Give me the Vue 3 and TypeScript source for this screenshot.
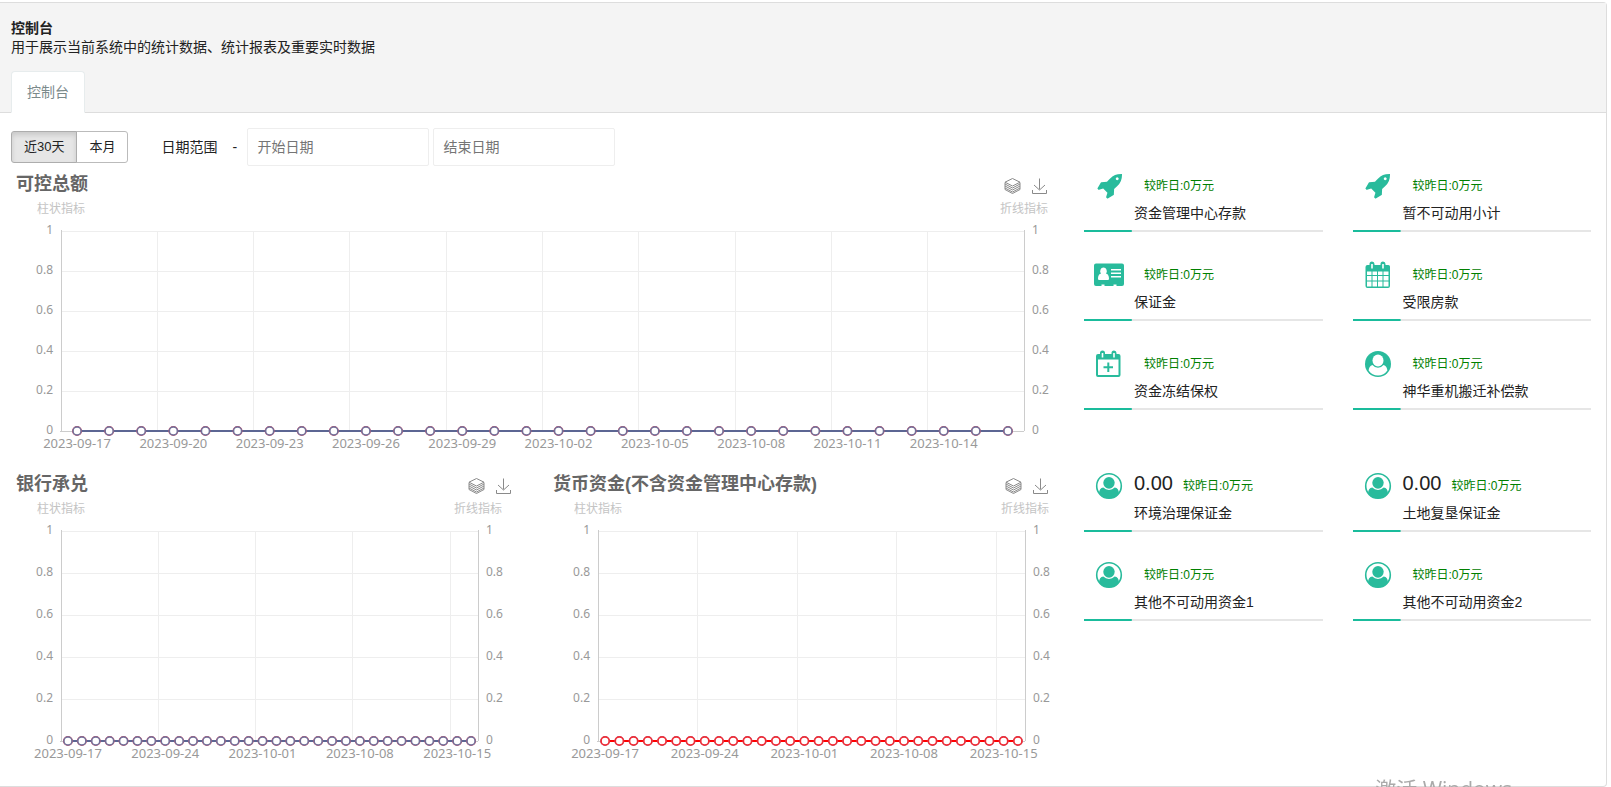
<script setup lang="ts">
import { ref } from 'vue'

type IconName = 'rocket' | 'idcard' | 'calendar' | 'calendar-plus' | 'user' | 'user-outline'

interface Chart {
  id: string
  title: string
  every: number
  tone: string
}

interface Card {
  icon: IconName
  value?: string
  label: string
}

const range = ref<'30' | 'month'>('30')
const startDate = ref('')
const endDate = ref('')

const charts: Chart[] = [
  { id: 'total', title: '可控总额', every: 3, tone: 'blue' },
  { id: 'bank', title: '银行承兑', every: 7, tone: 'blue' },
  { id: 'cash', title: '货币资金(不含资金管理中心存款)', every: 7, tone: 'red' },
]

const groups: Card[][] = [
  [
    { icon: 'rocket', label: '资金管理中心存款' },
    { icon: 'rocket', label: '暂不可动用小计' },
    { icon: 'idcard', label: '保证金' },
    { icon: 'calendar', label: '受限房款' },
    { icon: 'calendar-plus', label: '资金冻结保权' },
    { icon: 'user', label: '神华重机搬迁补偿款' },
  ],
  [
    { icon: 'user-outline', value: '0.00', label: '环境治理保证金' },
    { icon: 'user-outline', value: '0.00', label: '土地复垦保证金' },
    { icon: 'user-outline', label: '其他不可动用资金1' },
    { icon: 'user-outline', label: '其他不可动用资金2' },
  ],
]

const COUNT = 30
const dates = Array.from({ length: COUNT }, (_, i) =>
  new Date(Date.UTC(2023, 8, 17 + i)).toISOString().slice(0, 10),
)
const levels = [1, 0.8, 0.6, 0.4, 0.2, 0]

const center = (i: number): string => `${((i + 0.5) * 100) / COUNT}%`
const edge = (i: number): string => `${(i * 100) / COUNT}%`
const levelY = (v: number): string => `${(1 - v) * 100}%`
const marks = (every: number): number[] => dates.map((_, i) => i).filter((i) => i % every === 0)
</script>

<template>
  <div class="panel">
    <header class="head">
      <h1 class="head-title">控制台</h1>
      <p class="head-text">用于展示当前系统中的统计数据、统计报表及重要实时数据</p>
      <nav class="tabs"><a class="tab" href="#console">控制台</a></nav>
    </header>

    <form class="toolbar" @submit.prevent>
      <div class="btn-group">
        <button type="button" class="btn" :class="{ active: range === '30' }" @click="range = '30'">近30天</button>
        <button type="button" class="btn" :class="{ active: range === 'month' }" @click="range = 'month'">本月</button>
      </div>
      <label class="range-label" for="start-date">日期范围</label>
      <span class="dash">-</span>
      <input id="start-date" v-model="startDate" class="date" type="text" placeholder="开始日期" />
      <input v-model="endDate" class="date" type="text" placeholder="结束日期" aria-label="结束日期" />
    </form>

    <main class="content">
      <div class="charts">
        <section v-for="c in charts" :key="c.id" class="chart" :class="c.id">
          <div class="chart-head">
            <h2 class="chart-title">{{ c.title }}</h2>
            <div class="tools">
              <button type="button" class="tool" aria-label="堆叠">
                <svg width="18" height="18" viewBox="0 0 18 18">
                  <path class="layer" d="M2 7 9.500 11 17 7M2 9 9.500 13 17 9M2 11 9.500 15 17 11M2 5.500V12.500L9.500 16.500 17 12.500V5.500" />
                  <path d="M9.500 1.500 17 5.200 9.500 9 2 5.200Z" />
                </svg>
              </button>
              <button type="button" class="tool" aria-label="保存为图片">
                <svg width="18" height="18" viewBox="0 0 18 18">
                  <path d="M9.500 1.500V12.500M4 8l5.500 5L15 8M2.500 13v3.500h14V13" />
                </svg>
              </button>
            </div>
          </div>
          <div class="axis-names"><span>柱状指标</span><span>折线指标</span></div>
          <svg class="plot" :class="c.tone" width="100%" role="img" :aria-label="c.title">
            <g class="grid-lines">
              <line v-for="v in levels" :key="v" x1="0" x2="100%" :y1="levelY(v)" :y2="levelY(v)" />
              <line v-for="i in marks(c.every)" :key="i" :x1="edge(i)" :x2="edge(i)" y1="0" y2="100%" />
            </g>
            <g class="axes">
              <line x1="0" x2="0" y1="-1" y2="100%" />
              <line x1="100%" x2="100%" y1="-1" y2="100%" />
              <line x1="-1" x2="100%" y1="100%" y2="100%" />
            </g>
            <g class="labels">
              <template v-for="v in levels" :key="v">
                <text x="0" :y="levelY(v)" dx="-8" dy="3" text-anchor="end">{{ v }}</text>
                <text x="100%" :y="levelY(v)" dx="8" dy="3">{{ v }}</text>
              </template>
              <text v-for="i in marks(c.every)" :key="dates[i]" class="day" :x="center(i)" y="100%" dy="17" text-anchor="middle">{{ dates[i] }}</text>
            </g>
            <line class="series" :x1="center(0)" :x2="center(COUNT - 1)" y1="100%" y2="100%" />
            <g v-for="(d, i) in dates" :key="d">
              <circle class="dot under" :cx="center(i)" cy="100%" r="4" />
              <circle class="dot over" :cx="center(i)" cy="100%" r="4" />
            </g>
          </svg>
        </section>
      </div>

      <aside class="stats">
        <div v-for="(group, gi) in groups" :key="gi" class="group">
          <article v-for="card in group" :key="card.label" class="card">
            <div class="icon">
              <svg v-if="card.icon === 'rocket'" width="27" height="27" viewBox="-64 64 1792 1792">
                <path d="M1440 448q0-40-28-68t-68-28-68 28-28 68 28 68 68 28 68-28 28-68zm224-288q0 249-75.500 430.500t-253.500 360.500q-81 80-195 176l-20 379q-2 16-16 26l-384 224q-7 4-16 4-12 0-23-9l-64-64q-13-14-8-32l85-276-281-281-276 85q-3 1-9 1-14 0-23-9l-64-64q-17-19-5-39l224-384q10-14 26-16l379-20q96-114 176-195 188-187 358-258t431-71q14 0 24 9.500t10 22.500z" />
              </svg>
              <svg v-else-if="card.icon === 'idcard'" width="30" height="24" viewBox="0 0 30 24">
                <path fill-rule="evenodd" d="M2 0.500H28a2 2 0 0 1 2 2V21a2 2 0 0 1-2 2H22.500V21.500H19.500V23H10.500V21.500H7.500V23H2a2 2 0 0 1-2-2V2.500a2 2 0 0 1 2-2ZM17 6V7.500h10V6ZM17 9.500v1.500h10V9.500ZM17 13v1.500h10V13ZM9.500 4.500a3.300 3.600 0 0 0-2.400 6.100C5 11 4 13 4 15.500c0 1 .6 1.500 1.500 1.500h8c.9 0 1.500-.5 1.500-1.500 0-2.500-1-4.500-3.100-4.900A3.300 3.600 0 0 0 9.500 4.500Z" />
              </svg>
              <svg v-else-if="card.icon === 'calendar'" width="26" height="28" viewBox="0 0 26 28">
                <path fill-rule="evenodd" d="M2.500 4H4.500V3a2.500 2.500 0 0 1 5 0V4h6V3a2.500 2.500 0 0 1 5 0V4h2A2 2 0 0 1 25 6V25a2 2 0 0 1-2 2H2.500a2 2 0 0 1-2-2V6a2 2 0 0 1 2-2ZM6.200 3v4.500h1.600V3ZM17.200 3v4.500h1.600V3ZM2 10.500V14H6.500V10.500ZM7.500 10.500V14H12V10.500ZM13 10.500V14h4.500V10.500ZM18.500 10.500V14h5V10.500ZM2 15v4.500H6.500V15ZM7.500 15v4.500H12V15ZM13 15v4.500h4.500V15ZM18.500 15v4.500h5V15ZM2 20.500v5H6.500v-5ZM7.500 20.500v5H12v-5ZM13 20.500v5h4.500v-5ZM18.500 20.500v5h5v-5Z" />
              </svg>
              <svg v-else-if="card.icon === 'calendar-plus'" width="26" height="28" viewBox="0 0 26 28">
                <path fill-rule="evenodd" d="M2.500 4H4V3a2.500 2.500 0 0 1 5 0V4h6.500V3a2.500 2.500 0 0 1 5 0V4h2A2 2 0 0 1 24.500 6V25a2 2 0 0 1-2 2H2a2 2 0 0 1-2-2V6a2 2 0 0 1 2-2ZM5.700 3v4.500h1.600V3ZM17.200 3v4.500h1.600V3ZM2 9.500V25H22.500V9.500ZM11.300 12.500h2V16.300H17v2H13.300V22h-2V18.300H7.500v-2h3.800Z" />
              </svg>
              <svg v-else-if="card.icon === 'user'" width="26" height="26" viewBox="0 0 26 26">
                <circle cx="13" cy="13" r="13" />
                <path class="hole" d="M7.500 14C5 14.500 3.800 17 3.600 19.500a11.400 11.400 0 0 0 18.800 0C22.200 17 21 14.500 18.500 14a7 7 0 0 1-11 0Z" />
                <ellipse class="hole" cx="13" cy="9.500" rx="5.500" ry="6" />
              </svg>
              <svg v-else width="26" height="26" viewBox="0 0 26 26">
                <circle cx="13" cy="13" r="12.300" class="ring" />
                <ellipse cx="13" cy="9.800" rx="5.700" ry="5.900" />
                <path d="M3 20.500c.2-3.700 1.500-5.700 4.300-6a8 8 0 0 0 11.400 0c2.800.3 4.100 2.300 4.300 6a12.500 12.500 0 0 1-20 0Z" />
              </svg>
            </div>
            <div class="body">
              <div class="value-row"><span v-if="card.value" class="value">{{ card.value }}</span><span class="delta">较昨日:0万元</span></div>
              <div class="label">{{ card.label }}</div>
            </div>
            <div class="bar"></div>
          </article>
        </div>
      </aside>
    </main>
  </div>
  <div class="watermark">激活 Windows</div>
</template>

<style>
body {
  background: #fff;
}
</style>

<style scoped>
* {
  box-sizing: border-box;
}
.panel {
  margin: 2px 4px 0 0;
  min-height: calc(100vh - 2px);
  border: 1px solid #ddd;
  border-left: 0;
  border-radius: 0 4px 4px 0;
  font: 14px/20px "Liberation Sans", "Noto Sans CJK SC", sans-serif;
  color: #222;
}
.head {
  padding: 16px 11px 0;
  background: #f4f4f4;
  border-bottom: 1px solid #ddd;
}
.head-title,
.head-text {
  margin: 0;
  font-size: 14px;
  line-height: 19px;
}
.head-title {
  font-weight: 700;
}
.tabs {
  display: flex;
  margin: 14px 0 -1px;
}
.tab {
  padding: 10px 15px;
  border: 1px solid #e7eced;
  border-bottom-color: #fff;
  border-radius: 4px 4px 0 0;
  background: #fff;
  color: #7b8a8b;
  text-decoration: none;
}
.toolbar {
  display: flex;
  align-items: center;
  margin: 15px 11px 6px;
}
.btn-group {
  display: flex;
}
.btn {
  height: 32px;
  padding: 0 12px;
  border: 1px solid #bbb;
  background: #fff;
  color: #222;
  font: 13px/20px "Liberation Sans", "Noto Sans CJK SC", sans-serif;
}
.btn:first-child {
  border-radius: 3px 0 0 3px;
}
.btn + .btn {
  margin-left: -1px;
  border-radius: 0 3px 3px 0;
}
.btn.active {
  position: relative;
  border-color: #adadad;
  background: #e6e6e6;
  box-shadow: inset 0 3px 5px rgba(0, 0, 0, 0.125);
}
.range-label {
  margin-left: 33px;
}
.dash {
  width: 14px;
  margin: 0 1px 0 15px;
}
.date {
  width: 182px;
  height: 38px;
  padding: 0 9px;
  border: 1px solid #eee;
  border-radius: 2px;
  background: #fff;
  color: #222;
  font: inherit;
}
.date + .date {
  margin-left: 4px;
}
.date::placeholder {
  color: #757575;
}
.content {
  display: grid;
  grid-template-columns: minmax(0, 1047fr) minmax(0, 507fr);
  gap: 26px;
  padding: 0 15px 0 11px;
}
.charts {
  display: grid;
  grid-template-columns: minmax(0, 1fr) minmax(0, 1fr);
  column-gap: 27px;
  align-content: start;
}
.chart {
  padding: 0 33px 41px 50px;
}
.chart.total {
  grid-column: 1 / -1;
  padding-right: 34px;
}
.chart.bank {
  padding-right: 43px;
}
.chart-head {
  display: flex;
  justify-content: space-between;
  margin: 0 -24px 0 -45px;
}
.chart.bank .chart-head {
  margin-right: -34px;
}
.chart-title {
  margin: 0;
  font: 700 18px/24px "Liberation Sans", "Noto Sans CJK SC", sans-serif;
  color: #666;
  white-space: nowrap;
}
.tools {
  display: flex;
  gap: 9px;
  padding-top: 5px;
}
.tool {
  width: 18px;
  height: 18px;
  padding: 0;
  border: 0;
  background: none;
}
.tool svg {
  display: block;
}
.tool path {
  fill: none;
  stroke: #8a8a8a;
}
.axis-names {
  display: flex;
  justify-content: space-between;
  margin: 3px -24px 12px;
  color: #c4c4c4;
  font-size: 12px;
}
.plot {
  display: block;
  height: 210px;
  overflow: visible;
}
.total .plot {
  height: 200px;
}
.grid-lines line,
.axes line {
  stroke: #eee;
  shape-rendering: crispEdges;
}
.axes line {
  stroke: #ccc;
}
.labels text {
  fill: #999;
  font: 12px "Noto Sans", "Noto Sans CJK SC", sans-serif;
}
.labels .day {
  font-size: 13px;
}
.series {
  stroke-width: 2;
}
.blue .series {
  stroke: #5c6693;
}
.red .series {
  stroke: #f00;
}
.dot {
  fill: #fff;
}
.under {
  stroke: #c8506c;
  stroke-width: 2;
}
.blue .over {
  stroke: #6f7099;
  stroke-width: 1.5;
}
.red .over {
  stroke: #f02830;
  stroke-width: 1.5;
}
.group {
  display: grid;
  grid-template-columns: minmax(0, 1fr) minmax(0, 1fr);
  gap: 29px 30px;
}
.group + .group {
  margin-top: 62px;
}
.card {
  display: grid;
  grid-template-columns: 50px minmax(0, 1fr);
}
.icon {
  display: flex;
  align-items: center;
  justify-content: center;
  height: 28px;
}
.icon svg {
  fill: #29bb9c;
  overflow: visible;
}
.icon .hole {
  fill: #fff;
}
.icon .ring {
  fill: none;
  stroke: #29bb9c;
  stroke-width: 1.6;
}
.value-row {
  display: flex;
  align-items: center;
  height: 28px;
}
.value {
  font-size: 20px;
  line-height: 22px;
  padding-bottom: 6px;
}
.delta {
  margin-left: 10px;
  color: #008000;
  font-size: 12px;
}
.label {
  margin: 3px 0 7px;
}
.bar {
  grid-column: 1 / -1;
  height: 2px;
  background: linear-gradient(#1abc9c, #1abc9c) 0 0 / 20% 100% no-repeat #e6e6e6;
}
.watermark {
  position: fixed;
  right: 99px;
  bottom: -16px;
  color: #aaa;
  font: 21px/28px "Open Sans", "Noto Sans CJK SC", sans-serif;
  pointer-events: none;
}
</style>
